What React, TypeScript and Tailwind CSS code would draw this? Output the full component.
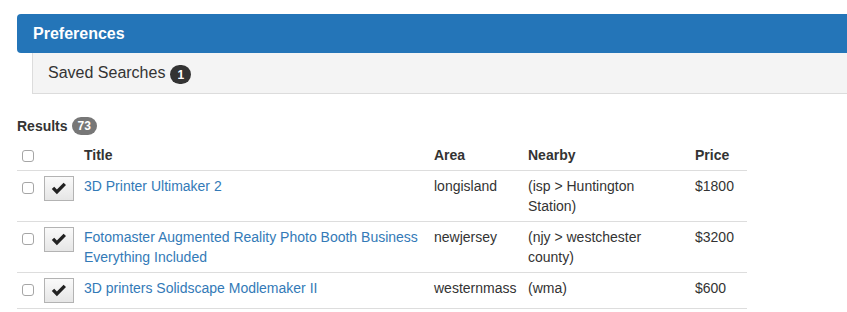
import React from "react";

const rows = [
  { title: "3D Printer Ultimaker 2", area: "longisland", nearby: "(isp > Huntington Station)", price: "$1800" },
  { title: "Fotomaster Augmented Reality Photo Booth Business Everything Included", area: "newjersey", nearby: "(njy > westchester county)", price: "$3200" },
  { title: "3D printers Solidscape Modlemaker II", area: "westernmass", nearby: "(wma)", price: "$600" },
];

function Box() {
  return <div className="w-[12px] h-[12px] rounded-[3px] border border-[#a6a6a6] bg-white" />;
}

function CheckBtn() {
  return (
    <button className="w-[30px] h-[25px] border border-[#b3b3b3] bg-gradient-to-b from-[#fafafa] to-[#e6e6e6] flex items-center justify-center">
      <svg width="16" height="13" viewBox="0 0 16 13">
        <path d="M0.8 7 L3.2 4.7 L5.9 7.4 L12.6 0.7 L15 3.1 L5.9 12.2 Z" fill="#222" />
      </svg>
    </button>
  );
}

export default function App() {
  return (
    <div className="w-[847px] h-[312px] overflow-hidden bg-white text-[#333] text-[14px] leading-[20px]" style={{ fontFamily: '"Liberation Sans", Arial, sans-serif' }}>
      <div className="pt-[14px]">
        <div className="ml-[17px] h-[39px] bg-[#2475b8] rounded-l-[4px] flex items-center pl-[16px]">
          <span className="text-white font-bold text-[16px]">Preferences</span>
        </div>
        <div className="ml-[32px] h-[41px] bg-[#f4f4f4] border-l border-b border-[#dcdcdc] flex items-center pl-[15px]">
          <span className="text-[16px] text-[#333]">Saved Searches</span>
          <span className="ml-[5px] mt-[3px] inline-flex items-center justify-center w-[21px] h-[19px] rounded-full bg-[#333] text-white text-[12px] font-bold leading-none">1</span>
        </div>
        <div className="mt-[22px] ml-[17px] flex items-center h-[20px]">
          <span className="font-bold text-[14px]">Results</span>
          <span className="ml-[4px] inline-flex items-center justify-center h-[18px] px-[6px] rounded-full bg-[#777] text-white text-[12px] font-bold leading-none">73</span>
        </div>
        <table className="ml-[17px] mt-[4px] w-[730px] table-fixed border-collapse">
          <colgroup>
            <col className="w-[22px]" />
            <col className="w-[40px]" />
            <col className="w-[350px]" />
            <col className="w-[94px]" />
            <col className="w-[167px]" />
            <col className="w-[57px]" />
          </colgroup>
          <thead>
            <tr className="border-b border-[#dddddd]">
              <th className="pl-[5px] py-[5px] align-top text-left">
                <div className="mt-[5px]"><Box /></div>
              </th>
              <th></th>
              <th className="px-[5px] py-[5px] text-left font-bold">Title</th>
              <th className="px-[5px] py-[5px] text-left font-bold">Area</th>
              <th className="px-[5px] py-[5px] text-left font-bold">Nearby</th>
              <th className="px-[5px] py-[5px] text-left font-bold">Price</th>
            </tr>
          </thead>
          <tbody>
            {rows.map((r, i) => (
              <tr key={i} className="border-b border-[#dddddd]">
                <td className="pl-[5px] py-[5px] align-top">
                  <div className="mt-[6px]"><Box /></div>
                </td>
                <td className="pl-[5px] py-[5px] align-top">
                  <CheckBtn />
                </td>
                <td className="px-[5px] py-[5px] align-top">
                  <a className="text-[#337ab7]" href="#">{r.title}</a>
                </td>
                <td className="px-[5px] py-[5px] align-top">{r.area}</td>
                <td className="pl-[5px] pr-[12px] py-[5px] align-top">{r.nearby}</td>
                <td className="px-[5px] py-[5px] align-top">{r.price}</td>
              </tr>
            ))}
          </tbody>
        </table>
      </div>
    </div>
  );
}
